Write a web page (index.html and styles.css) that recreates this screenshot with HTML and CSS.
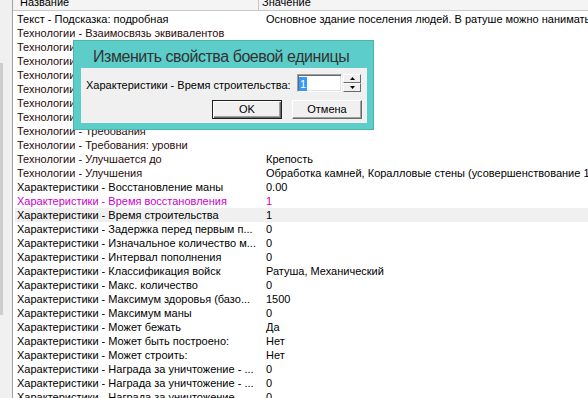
FILE: index.html
```html
<!DOCTYPE html>
<html lang="ru">
<head>
    <meta charset="UTF-8">
    <meta name="viewport" content="width=device-width, initial-scale=1.0">
    <title>Свойства боевой единицы</title>

    <link rel="stylesheet" href="styles.css">
</head>
<body>
    <div class="window">
        <div class="side">
            <div class="side-thumb"></div>
        </div>

        <div class="list">
            <div class="list-head">
                <div class="head-name"><span>Название</span></div>
                <div class="head-value"><span>Значение</span></div>
            </div>

            <div class="list-body">
                <div class="row"><div class="cell-name">Текст - Подсказка: подробная</div><div class="cell-value">Основное здание поселения людей. В ратуше можно нанимать работников</div></div>
                <div class="row tech"><div class="cell-name">Технологии - Взаимосвязь эквивалентов</div><div class="cell-value"></div></div>
                <div class="row tech"><div class="cell-name">Технологии - Доступно в эпоху</div><div class="cell-value"></div></div>
                <div class="row tech"><div class="cell-name">Технологии - Зависимости</div><div class="cell-value"></div></div>
                <div class="row tech"><div class="cell-name">Технологии - Замена</div><div class="cell-value"></div></div>
                <div class="row tech"><div class="cell-name">Технологии - Необходимо для</div><div class="cell-value"></div></div>
                <div class="row tech"><div class="cell-name">Технологии - Открывает</div><div class="cell-value"></div></div>
                <div class="row tech"><div class="cell-name">Технологии - Рейтинг</div><div class="cell-value"></div></div>
                <div class="row tech"><div class="cell-name">Технологии - Требования</div><div class="cell-value"></div></div>
                <div class="row tech"><div class="cell-name">Технологии - Требования: уровни</div><div class="cell-value"></div></div>
                <div class="row tech"><div class="cell-name">Технологии - Улучшается до</div><div class="cell-value">Крепость</div></div>
                <div class="row tech"><div class="cell-name">Технологии - Улучшения</div><div class="cell-value">Обработка камней, Коралловые стены (усовершенствование 1)</div></div>
                <div class="row"><div class="cell-name">Характеристики - Восстановление маны</div><div class="cell-value">0.00</div></div>
                <div class="row changed"><div class="cell-name">Характеристики - Время восстановления</div><div class="cell-value">1</div></div>
                <div class="row current"><div class="cell-name">Характеристики - Время строительства</div><div class="cell-value">1</div></div>
                <div class="row"><div class="cell-name">Характеристики - Задержка перед первым п...</div><div class="cell-value">0</div></div>
                <div class="row"><div class="cell-name">Характеристики - Изначальное количество м...</div><div class="cell-value">0</div></div>
                <div class="row"><div class="cell-name">Характеристики - Интервал пополнения</div><div class="cell-value">0</div></div>
                <div class="row"><div class="cell-name">Характеристики - Классификация войск</div><div class="cell-value">Ратуша, Механический</div></div>
                <div class="row"><div class="cell-name">Характеристики - Макс. количество</div><div class="cell-value">0</div></div>
                <div class="row"><div class="cell-name">Характеристики - Максимум здоровья (базо...</div><div class="cell-value">1500</div></div>
                <div class="row"><div class="cell-name">Характеристики - Максимум маны</div><div class="cell-value">0</div></div>
                <div class="row"><div class="cell-name">Характеристики - Может бежать</div><div class="cell-value">Да</div></div>
                <div class="row"><div class="cell-name">Характеристики - Может быть построено:</div><div class="cell-value">Нет</div></div>
                <div class="row"><div class="cell-name">Характеристики - Может строить:</div><div class="cell-value">Нет</div></div>
                <div class="row"><div class="cell-name">Характеристики - Награда за уничтожение - ...</div><div class="cell-value">0</div></div>
                <div class="row"><div class="cell-name">Характеристики - Награда за уничтожение - ...</div><div class="cell-value">0</div></div>
                <div class="row"><div class="cell-name">Характеристики - Награда за уничтожение - ...</div><div class="cell-value">0</div></div>
            </div>
        </div>
    </div>

    <div class="dialog">
        <div class="dialog-title">Изменить свойства боевой единицы</div>
        <div class="dialog-client">
            <div class="field-row">
                <label class="field-label">Характеристики - Время строительства:</label>
                <div class="spin">
                    <div class="spin-input"><span class="sel">1</span></div>
                    <div class="spin-buttons">
                        <div class="spin-btn">
                            <svg width="5" height="3" viewBox="0 0 5 3"><polygon points="2.5,0 5,3 0,3" fill="#000"/></svg>
                        </div>
                        <div class="spin-btn">
                            <svg width="5" height="3" viewBox="0 0 5 3"><polygon points="0,0 5,0 2.5,3" fill="#000"/></svg>
                        </div>
                    </div>
                </div>
            </div>
            <div class="button-row">
                <div class="btn btn-default">OK</div>
                <div class="btn">Отмена</div>
            </div>
        </div>
    </div>
</body>
</html>
```

FILE: styles.css
```css
html, body {
    margin: 0;
    height: 100%;
    overflow: hidden;
}

body {
    font-family: "Liberation Sans", Arial, sans-serif;
    font-size: 11px;
    color: #000;
    background-color: #fff;
}

.window {
    display: flex;
    height: 398px;
}

/* left pane, only its scrollbar edge is visible */
.side {
    flex: 0 0 12px;
    background-color: #f0f0f0;
}

.side-thumb {
    width: 3px;
    height: 252px;
    margin-top: 63px;
    background-color: #cdcdcd;
}

.list {
    flex: 1;
    min-width: 0;
    border-left: 1px solid #a0a0a0;
    overflow: hidden;
}

.list-head {
    display: flex;
    height: 10px;
    line-height: 11px;
    border-bottom: 1px solid #c8c8c8;
    background-color: #f4f4f4;
    overflow: hidden;
    white-space: nowrap;
}

.list-head span {
    display: block;
    margin-top: -3px;
}

.head-name {
    flex: 0 0 238px;
    padding-left: 7px;
    border-right: 1px solid #c8c8c8;
}

.head-value {
    padding-left: 3px;
}

.list-body {
    padding-top: 1px;
}

.row {
    display: flex;
    height: 14px;
    line-height: 14px;
    margin-left: 2px;
    white-space: nowrap;
}

.cell-name {
    flex: 0 0 245px;
    padding-left: 2px;
    overflow: hidden;
}

.cell-value {
    padding-left: 4px;
}

.row.tech .cell-name {
    color: #2a0a0a;
}

.row.changed {
    color: #cc00cc;
}

.row.current {
    background-color: #f0f0f0;
}

/* modal dialog */
.dialog {
    position: absolute;
    left: 73px;
    top: 40px;
    width: 301px;
    height: 90px;
    box-sizing: border-box;
    display: flex;
    flex-direction: column;
    padding: 0 6px 6px 7px;
    border: 1px solid #48b5b1;
    background-color: #5ccdc9;
}

.dialog-title {
    height: 22px;
    padding: 5px 0 0 12px;
    font-size: 16px;
    line-height: 22px;
    letter-spacing: -0.45px;
    color: #333;
    white-space: nowrap;
}

.dialog-client {
    flex: 1;
    display: flex;
    flex-direction: column;
    padding: 6px 5px 4px 5px;
    background-color: #f0f0f0;
}

.field-row {
    display: flex;
    align-items: center;
    height: 18px;
}

.field-label {
    flex: 1;
    padding-top: 3px;
    line-height: 14px;
    white-space: nowrap;
}

.spin {
    display: flex;
    gap: 1px;
    margin-right: 1px;
}

.spin-input {
    width: 45px;
    height: 18px;
    box-sizing: border-box;
    padding: 1px 0 0 1px;
    border: 1px solid;
    border-color: #a0a0a0 #fff #fff #a0a0a0;
    box-shadow: inset 1px 1px #696969, inset -1px -1px #e3e3e3;
    background-color: #fff;
}

.sel {
    display: inline-block;
    height: 14px;
    line-height: 14px;
    margin-top: 1px;
    padding: 0 1px;
    color: #fff;
    background-color: #3399ff;
}

.spin-buttons {
    display: flex;
    flex-direction: column;
    width: 18px;
}

.spin-btn {
    height: 9px;
    box-sizing: border-box;
    display: flex;
    align-items: center;
    justify-content: center;
    border: 1px solid;
    border-color: #fff #696969 #696969 #fff;
    background-color: #f0f0f0;
}

.spin-btn svg {
    display: block;
}

.button-row {
    display: flex;
    justify-content: flex-end;
    gap: 10px;
    margin-top: 8px;
}

.btn {
    width: 70px;
    height: 19px;
    box-sizing: border-box;
    text-align: center;
    line-height: 17px;
    border: 1px solid;
    border-color: #fff #696969 #696969 #fff;
    box-shadow: inset -1px -1px #a0a0a0;
    background-color: #f0f0f0;
}

.btn-default {
    border-color: #1e1e1e;
    box-shadow: inset 1px 1px #fff, inset -1px -1px #696969, inset -2px -2px #a0a0a0;
}
```
